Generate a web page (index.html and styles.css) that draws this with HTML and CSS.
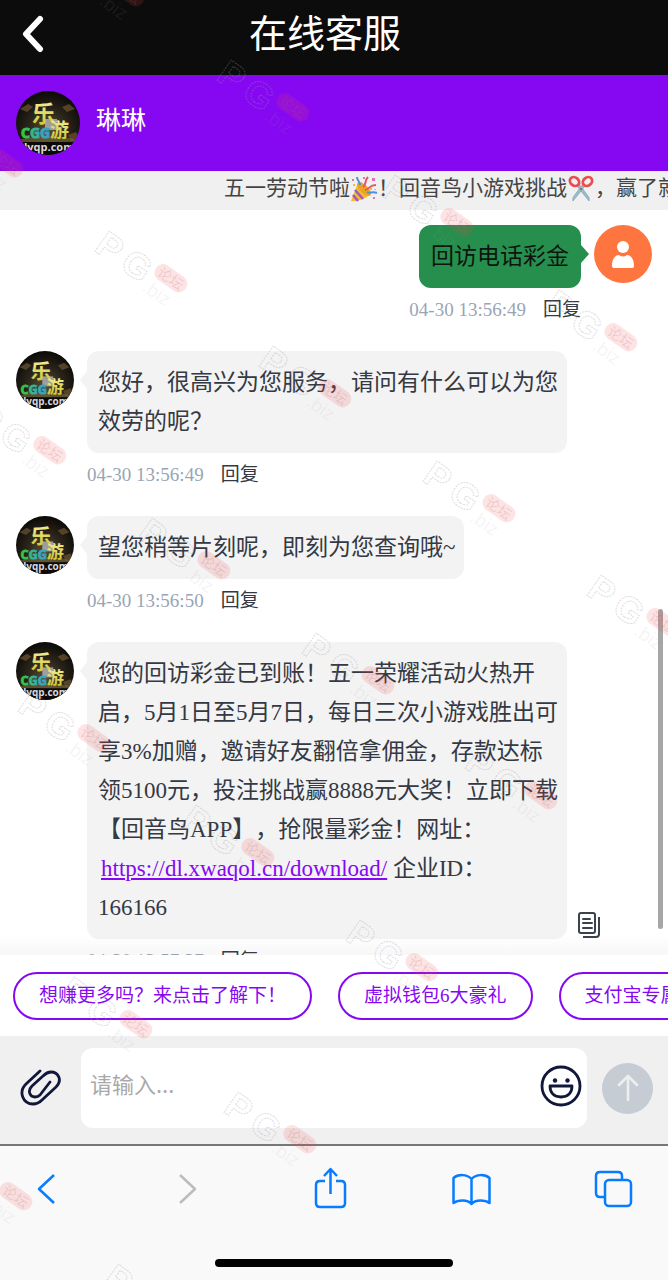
FILE: index.html
```html
<!DOCTYPE html>
<html lang="zh-CN">
<head>
<meta charset="utf-8">
<meta name="viewport" content="width=device-width, initial-scale=1">
<title>在线客服</title>
<link rel="stylesheet" href="styles.css">
</head>
<body>
<svg class="defs" aria-hidden="true">
  <defs>
    <radialGradient id="glow" cx="50%" cy="60%" r="60%">
      <stop offset="0" stop-color="#5a5034"/>
      <stop offset=".5" stop-color="#2b261b"/>
      <stop offset="1" stop-color="#0b0907"/>
    </radialGradient>
    <linearGradient id="gold" x1="0" y1="0" x2="0" y2="1">
      <stop offset="0" stop-color="#fbf6b0"/>
      <stop offset="1" stop-color="#c9c022"/>
    </linearGradient>
    <linearGradient id="teal" x1="0" y1="0" x2="1" y2="0">
      <stop offset="0" stop-color="#35c92f"/>
      <stop offset=".6" stop-color="#35aeb0"/>
      <stop offset="1" stop-color="#3b9bd0"/>
    </linearGradient>
    <clipPath id="disc"><circle cx="32" cy="32" r="32"/></clipPath>
    <symbol id="agent" viewBox="0 0 64 64">
      <g clip-path="url(#disc)">
        <rect width="64" height="64" fill="url(#glow)"/>
        <path d="M4 18l8-5 5 3-6 5zM46 16l7-3 6 5-8 3zM52 44l8-3 4 6-9 3z" fill="#6d5430" opacity=".7"/>
        <path d="M2 49q30-8 60 0v3H2z" fill="#7a6a3a" opacity=".6"/>
        <rect x="29" y="28" width="12" height="11" fill="#b8bdc4" opacity=".75"/>
        <text x="16" y="31" class="logo-cjk" font-size="23" fill="url(#gold)">乐</text>
        <text x="34" y="46" class="logo-cjk" font-size="19" fill="url(#gold)">游</text>
        <text x="5" y="47" class="logo-latin" font-size="14" fill="url(#teal)" stroke="url(#teal)">CGG</text>
        <rect y="51" width="64" height="13" fill="#0c0a08"/>
        <text x="8" y="60" class="logo-latin" font-size="11" fill="#d8d8dc">lyqp.com</text>
      </g>
    </symbol>
    <g id="mark" transform="rotate(35)">
      <text class="mark-outline" x="0" y="0" font-size="36">P</text>
      <text class="mark-outline" x="31" y="0" font-size="36">G</text>
      <text class="mark-sub" x="62" y="5" font-size="19">.biz</text>
      <rect x="62" y="-30" width="36" height="17" rx="8" fill="#f0454b" opacity=".15"/>
      <text class="mark-tag" x="66" y="-16" font-size="14">论坛</text>
    </g>
  </defs>
</svg>

<div class="app">
  <header class="titlebar">
    <button class="titlebar-back" type="button" aria-label="返回">
      <svg width="24" height="38" viewBox="0 0 24 38"><path d="M20 4L6 19l14 15" fill="none" stroke="#fff" stroke-width="6" stroke-linecap="round" stroke-linejoin="round"/></svg>
    </button>
    <h1 class="titlebar-title">在线客服</h1>
  </header>

  <section class="agent">
    <svg class="agent-avatar" role="img" aria-label="琳琳"><use href="#agent"/></svg>
    <h2 class="agent-name">琳琳</h2>
  </section>

  <div class="notice">
    <span>五一劳动节啦</span><svg class="notice-emoji" viewBox="0 0 28 28" aria-hidden="true">
      <path d="M8 8L1 26q9 1 19-6z" fill="#f8b92c"/>
      <path d="M5 15l8 9M3 20l5 6" stroke="#9a5ac8" stroke-width="2.5"/>
      <ellipse cx="14" cy="14" rx="4" ry="9" transform="rotate(-45 14 14)" fill="#e9a51f"/>
      <path d="M13 12c4-3 1-6 5-10M15 15c5-1 4-5 11-5" fill="none" stroke="#e8536c" stroke-width="2"/>
      <path d="M10 10c0-4-3-4-3-8M17 17c3 2 5-1 10 1" fill="none" stroke="#4b8fe0" stroke-width="2"/>
      <path d="M2 4h2v2H2zM22 3h3v3h-3zM23 22h2v2h-2zM13 2h2v2h-2z" fill="#dc73b7"/>
      <path d="M20 13h2v2h-2zM24 14h2v1h-2zM3 9h2v2H3z" fill="#f1be36"/>
    </svg><span>！回音鸟小游戏挑战</span><svg class="notice-emoji" viewBox="0 0 28 28" aria-hidden="true">
      <path d="M10 11l12 15q1-3-1-5L12 9zM18 11L6 26q-1-3 1-5l9-12z" fill="#9dbdcc" stroke="#7f9dac" stroke-width=".7"/>
      <ellipse cx="7.500" cy="6.500" rx="4" ry="5" transform="rotate(-50 7.500 6.500)" fill="none" stroke="#ea4d50" stroke-width="2.800"/>
      <ellipse cx="20.500" cy="6.500" rx="4" ry="5" transform="rotate(50 20.500 6.500)" fill="none" stroke="#ea4d50" stroke-width="2.800"/>
      <circle cx="14" cy="14" r="1" fill="#555"/>
    </svg><span>，赢了就</span>
  </div>

  <main class="chat">
    <article class="message message-own">
      <div class="message-body">
        <p class="bubble">回访电话彩金</p>
        <div class="meta"><time>04-30 13:56:49</time><button class="reply" type="button">回复</button></div>
      </div>
      <svg class="message-avatar" viewBox="0 0 58 58" role="img" aria-label="用户">
        <circle cx="29" cy="29" r="29" fill="#ff753f"/>
        <circle cx="29" cy="22" r="6" fill="#fff"/>
        <path d="M18 41c0-7 3-11 7-11q4 3 8 0c4 0 7 4 7 11q0 2-2 2H20q-2 0-2-2z" fill="#fff"/>
      </svg>
    </article>

    <article class="message">
      <svg class="message-avatar" aria-hidden="true"><use href="#agent"/></svg>
      <div class="message-body">
        <p class="bubble">您好，很高兴为您服务，请问有什么可以为您效劳的呢？</p>
        <div class="meta"><time>04-30 13:56:49</time><button class="reply" type="button">回复</button></div>
      </div>
    </article>

    <article class="message">
      <svg class="message-avatar" aria-hidden="true"><use href="#agent"/></svg>
      <div class="message-body">
        <p class="bubble">望您稍等片刻呢，即刻为您查询哦~</p>
        <div class="meta"><time>04-30 13:56:50</time><button class="reply" type="button">回复</button></div>
      </div>
    </article>

    <article class="message">
      <svg class="message-avatar" aria-hidden="true"><use href="#agent"/></svg>
      <div class="message-body">
        <div class="bubble-row">
          <p class="bubble">您的回访彩金已到账！五一荣耀活动火热开启，5月1日至5月7日，每日三次小游戏胜出可享3%加赠，邀请好友翻倍拿佣金，存款达标领5100元，投注挑战赢8888元大奖！立即下载【回音鸟APP】，抢限量彩金！网址：<br><a class="bubble-link" href="https://dl.xwaqol.cn/download/">https://dl.xwaqol.cn/download/</a> 企业ID：<br>166166</p>
          <button class="copy" type="button" aria-label="复制">
            <svg width="24" height="28" viewBox="0 0 24 28" fill="none" stroke="#3b424b" stroke-width="2"><rect x="2" y="2" width="16" height="20" rx="2"/><path d="M6 8h7M6 12h9M6 17h9" stroke-linecap="round"/><path d="M6 26h13q3 0 3-3V6" stroke-width="2"/></svg>
          </button>
        </div>
        <div class="meta"><time>04-30 13:57:37</time><button class="reply" type="button">回复</button></div>
      </div>
    </article>
    <div class="chat-fade"></div>
    <div class="chat-thumb"></div>
  </main>

  <nav class="chips">
    <button class="chip" type="button">想赚更多吗？来点击了解下！</button>
    <button class="chip" type="button">虚拟钱包6大豪礼</button>
    <button class="chip" type="button">支付宝专属</button>
  </nav>

  <form class="composer">
    <button class="composer-attach" type="button" aria-label="附件">
      <svg width="42" height="40" viewBox="0 0 42 40" fill="none" stroke="#11173a" stroke-width="2.800" stroke-linecap="round" stroke-linejoin="round"><path d="M20 3L6 16C-2 24 3 36 13 36C17 36 20 34 22 32L36 19C43 12 38 4 31 4C28 4 26 5 23 8L12 18C7 23 10 29 15 29C17 29 19 28 20 27L30 14"/></svg>
    </button>
    <div class="field">
      <textarea class="field-input" rows="1" aria-label="消息" placeholder="请输入..."></textarea>
      <button class="field-emoji" type="button" aria-label="表情">
        <svg width="42" height="42" viewBox="0 0 42 42" fill="none" stroke="#11173a" stroke-width="2.800"><circle cx="21" cy="21" r="19"/><path d="M10 21h22c0 7-4 11-11 11s-11-4-11-11z" stroke-linejoin="round"/><circle cx="15" cy="15.500" r="2.200" fill="#11173a" stroke="none"/><circle cx="27.500" cy="15.500" r="2.200" fill="#11173a" stroke="none"/></svg>
      </button>
    </div>
    <button class="composer-send" type="submit" aria-label="发送">
      <svg width="28" height="30" viewBox="0 0 28 30" fill="none" stroke="#ecefef" stroke-width="2.600" stroke-linecap="round" stroke-linejoin="round"><path d="M14 27V3M5 12l9-9 9 9"/></svg>
    </button>
  </form>

  <footer class="browser">
    <div class="browser-tools">
      <button class="tool" type="button" aria-label="后退"><svg width="44" height="44" viewBox="0 0 44 44"><path d="M30 8L15 22l15 14"/></svg></button>
      <button class="tool tool-off" type="button" aria-label="前进" disabled><svg width="44" height="44" viewBox="0 0 44 44"><path d="M14 8l15 14-15 14"/></svg></button>
      <button class="tool" type="button" aria-label="分享"><svg width="44" height="44" viewBox="0 0 44 44"><path d="M17 14h-5q-4 0-4 4v18q0 4 4 4h21q4 0 4-4V18q0-4-4-4h-5M22.500 27V3M16 9l6.500-7 6.500 7"/></svg></button>
      <button class="tool" type="button" aria-label="书签"><svg width="44" height="44" viewBox="0 0 44 44"><path d="M22.500 12v25M22.500 12C18 7 9 7 4.500 11v25c4-3 14-4 18 1 4-5 14-4 18-1V11C36 7 27 7 22.500 12z"/></svg></button>
      <button class="tool" type="button" aria-label="标签页"><svg width="44" height="44" viewBox="0 0 44 44"><path d="M13 30H9q-4 0-4-4V9q0-4 4-4h18q4 0 4 4v4"/><rect x="14" y="13" width="26" height="26" rx="4"/></svg></button>
    </div>
    <div class="home-bar"></div>
  </footer>

  <svg class="watermark" aria-hidden="true">
    <use href="#mark" x="0" y="0" transform="translate(50 -36)"/>
    <use href="#mark" transform="translate(215 79)"/>
    <use href="#mark" transform="translate(379 194)"/>
    <use href="#mark" transform="translate(543 309)"/>
    <use href="#mark" transform="translate(-71 135)"/>
    <use href="#mark" transform="translate(93 250)"/>
    <use href="#mark" transform="translate(257 365)"/>
    <use href="#mark" transform="translate(421 480)"/>
    <use href="#mark" transform="translate(585 594)"/>
    <use href="#mark" transform="translate(-28 422)"/>
    <use href="#mark" transform="translate(136 537)"/>
    <use href="#mark" transform="translate(300 652)"/>
    <use href="#mark" transform="translate(463 767)"/>
    <use href="#mark" transform="translate(16 710)"/>
    <use href="#mark" transform="translate(180 824)"/>
    <use href="#mark" transform="translate(344 939)"/>
    <use href="#mark" transform="translate(58 996)"/>
    <use href="#mark" transform="translate(222 1111)"/>
    <use href="#mark" transform="translate(-62 1168)"/>
    <use href="#mark" transform="translate(102 1283)"/>
  </svg>
</div>
</body>
</html>
```

FILE: styles.css
```css
* {
  box-sizing: border-box;
}

body,
h1,
h2,
p {
  margin: 0;
}

body {
  background: #fff;
  color: #343943;
  font-family: "Liberation Serif", "Noto Sans CJK SC", serif;
  text-spacing-trim: space-all;
}

button {
  padding: 0;
  border: 0;
  background: none;
  font-family: inherit;
  cursor: pointer;
}

button svg {
  display: block;
}

.defs {
  position: absolute;
  width: 0;
  height: 0;
}

.logo-cjk {
  font-family: "Noto Sans CJK SC", sans-serif;
  font-weight: 700;
}

.logo-latin {
  font-family: "Open Sans", sans-serif;
  font-weight: 700;
}

.app {
  position: relative;
  display: flex;
  flex-direction: column;
  height: 100vh;
  overflow: hidden;
}

/* Title bar */
.titlebar {
  display: grid;
  grid-template-columns: 48px 1fr 48px;
  align-items: center;
  height: 75px;
  padding: 0 26px 8px 8px;
  background: #0c0c0c;
  color: #fff;
}

.titlebar-back {
  justify-self: center;
}

.titlebar-title {
  font-size: 38px;
  font-weight: 400;
  line-height: 56px;
  text-align: center;
}

/* Agent strip */
.agent {
  display: flex;
  gap: 16px;
  height: 96px;
  padding: 16px;
  background: #8608f2;
  color: #fff;
}

.agent-avatar {
  width: 64px;
  height: 64px;
}

.agent-name {
  font-size: 25px;
  font-weight: 400;
  line-height: 60px;
}

/* Scrolling notice */
.notice {
  display: flex;
  align-items: center;
  height: 39px;
  padding: 0 0 4px 224px;
  overflow: hidden;
  background: #f0f0f0;
  color: #444;
  font-size: 21px;
  line-height: 35px;
  white-space: nowrap;
}

.notice-emoji {
  flex: none;
  width: 28px;
  height: 28px;
}

/* Conversation */
.chat {
  position: relative;
  flex: 1;
  display: flex;
  flex-direction: column;
  gap: 27px;
  min-height: 0;
  padding: 15px 16px 0;
  overflow: hidden;
}

.message {
  display: flex;
  flex: none;
  gap: 13px;
}

.message-own {
  justify-content: flex-end;
}

.message-avatar {
  flex: none;
  width: 58px;
  height: 58px;
}

.message-body {
  display: flex;
  flex-direction: column;
  align-items: flex-start;
}

.message-own .message-body {
  align-items: flex-end;
}

.bubble {
  position: relative;
  max-width: 480px;
  padding: 12px 9px 12px 11px;
  border-radius: 12px;
  background: #f3f3f3;
  font-size: 23px;
  line-height: 39px;
}

.bubble::before {
  content: "";
  position: absolute;
  top: 20px;
  right: 100%;
  border: 9px solid transparent;
  border-left-width: 0;
  border-right: 7px solid #f3f3f3;
}

.message-own .bubble {
  padding: 12px;
  background: #278f4d;
  color: #0d1510;
}

.message-own .bubble::before {
  right: auto;
  left: 100%;
  border-right-width: 0;
  border-left: 8px solid #278f4d;
}

.bubble-row {
  display: flex;
  align-items: flex-end;
  gap: 10px;
}

.bubble-link {
  margin-left: 3px;
  color: #8608f2;
}

.meta {
  display: flex;
  gap: 17px;
  margin-top: 8px;
  color: #99a5b5;
  font-size: 19px;
  line-height: 28px;
}

.reply {
  color: #343943;
  font-size: 19px;
  line-height: 28px;
}

.chat-fade {
  position: absolute;
  right: 0;
  bottom: 0;
  left: 0;
  height: 20px;
  background: linear-gradient(rgba(120, 120, 120, 0), rgba(120, 120, 120, 0.06));
}

.chat-thumb {
  position: absolute;
  right: 5px;
  bottom: 26px;
  width: 5px;
  height: 43%;
  border-radius: 3px;
  background: #a6a6a6;
}

/* Quick questions */
.chips {
  display: flex;
  gap: 26px;
  padding: 17px 13px 16px;
  overflow: hidden;
  background: #fff;
}

.chip {
  flex: none;
  height: 48px;
  padding: 0 24px;
  border: 2px solid #8608f2;
  border-radius: 24px;
  color: #8608f2;
  font-size: 19px;
  line-height: 28px;
}

/* Composer */
.composer {
  display: flex;
  align-items: center;
  gap: 15px;
  height: 108px;
  padding: 0 15px 4px 20px;
  background: #f0f0f0;
}

.composer-attach {
  flex: none;
}

.field {
  display: flex;
  flex: 1;
  align-items: center;
  min-width: 0;
  height: 80px;
  margin-left: 4px;
  padding: 0 5px 4px 9px;
  border-radius: 12px;
  background: #fff;
}

.field-input {
  flex: 1;
  min-width: 0;
  height: 36px;
  padding: 0;
  border: 0;
  outline: 0;
  background: none;
  color: #343943;
  font-family: "Noto Sans CJK SC", sans-serif;
  font-size: 22px;
  line-height: 30px;
  resize: none;
}

.field-input::placeholder {
  color: #a9a9a9;
}

.composer-send {
  display: flex;
  flex: none;
  align-items: center;
  justify-content: center;
  width: 51px;
  height: 51px;
  border-radius: 50%;
  background: #c5ccd4;
}

/* Browser toolbar */
.browser {
  display: flex;
  flex-direction: column;
  align-items: center;
  justify-content: space-between;
  height: 136px;
  padding: 21px 0 13px;
  border-top: 2px solid #777;
  background: #f9f9f9;
}

.browser-tools {
  display: flex;
  justify-content: space-between;
  width: 100%;
  padding: 0 33px 0 24px;
}

.tool svg {
  fill: none;
  stroke: #087cff;
  stroke-width: 2.5;
  stroke-linejoin: round;
}

.tool-off svg {
  stroke: #bcbcbc;
}

.home-bar {
  width: 238px;
  height: 8px;
  border-radius: 4px;
  background: #000;
}

/* Repeating mark over the whole screen */
.watermark {
  position: absolute;
  inset: 0;
  width: 100%;
  height: 100%;
  pointer-events: none;
}

.mark-outline,
.mark-sub {
  fill: none;
  stroke: #9a9aa2;
  stroke-opacity: 0.35;
  stroke-width: 1;
  stroke-dasharray: 2 1;
  font-family: "Liberation Sans", sans-serif;
  font-weight: 700;
}

.mark-sub {
  fill: #9a9aa2;
  fill-opacity: 0.1;
  stroke: none;
  font-weight: 400;
}

.mark-tag {
  fill: #b06060;
  fill-opacity: 0.2;
  font-family: "Noto Sans CJK SC", sans-serif;
}
```
